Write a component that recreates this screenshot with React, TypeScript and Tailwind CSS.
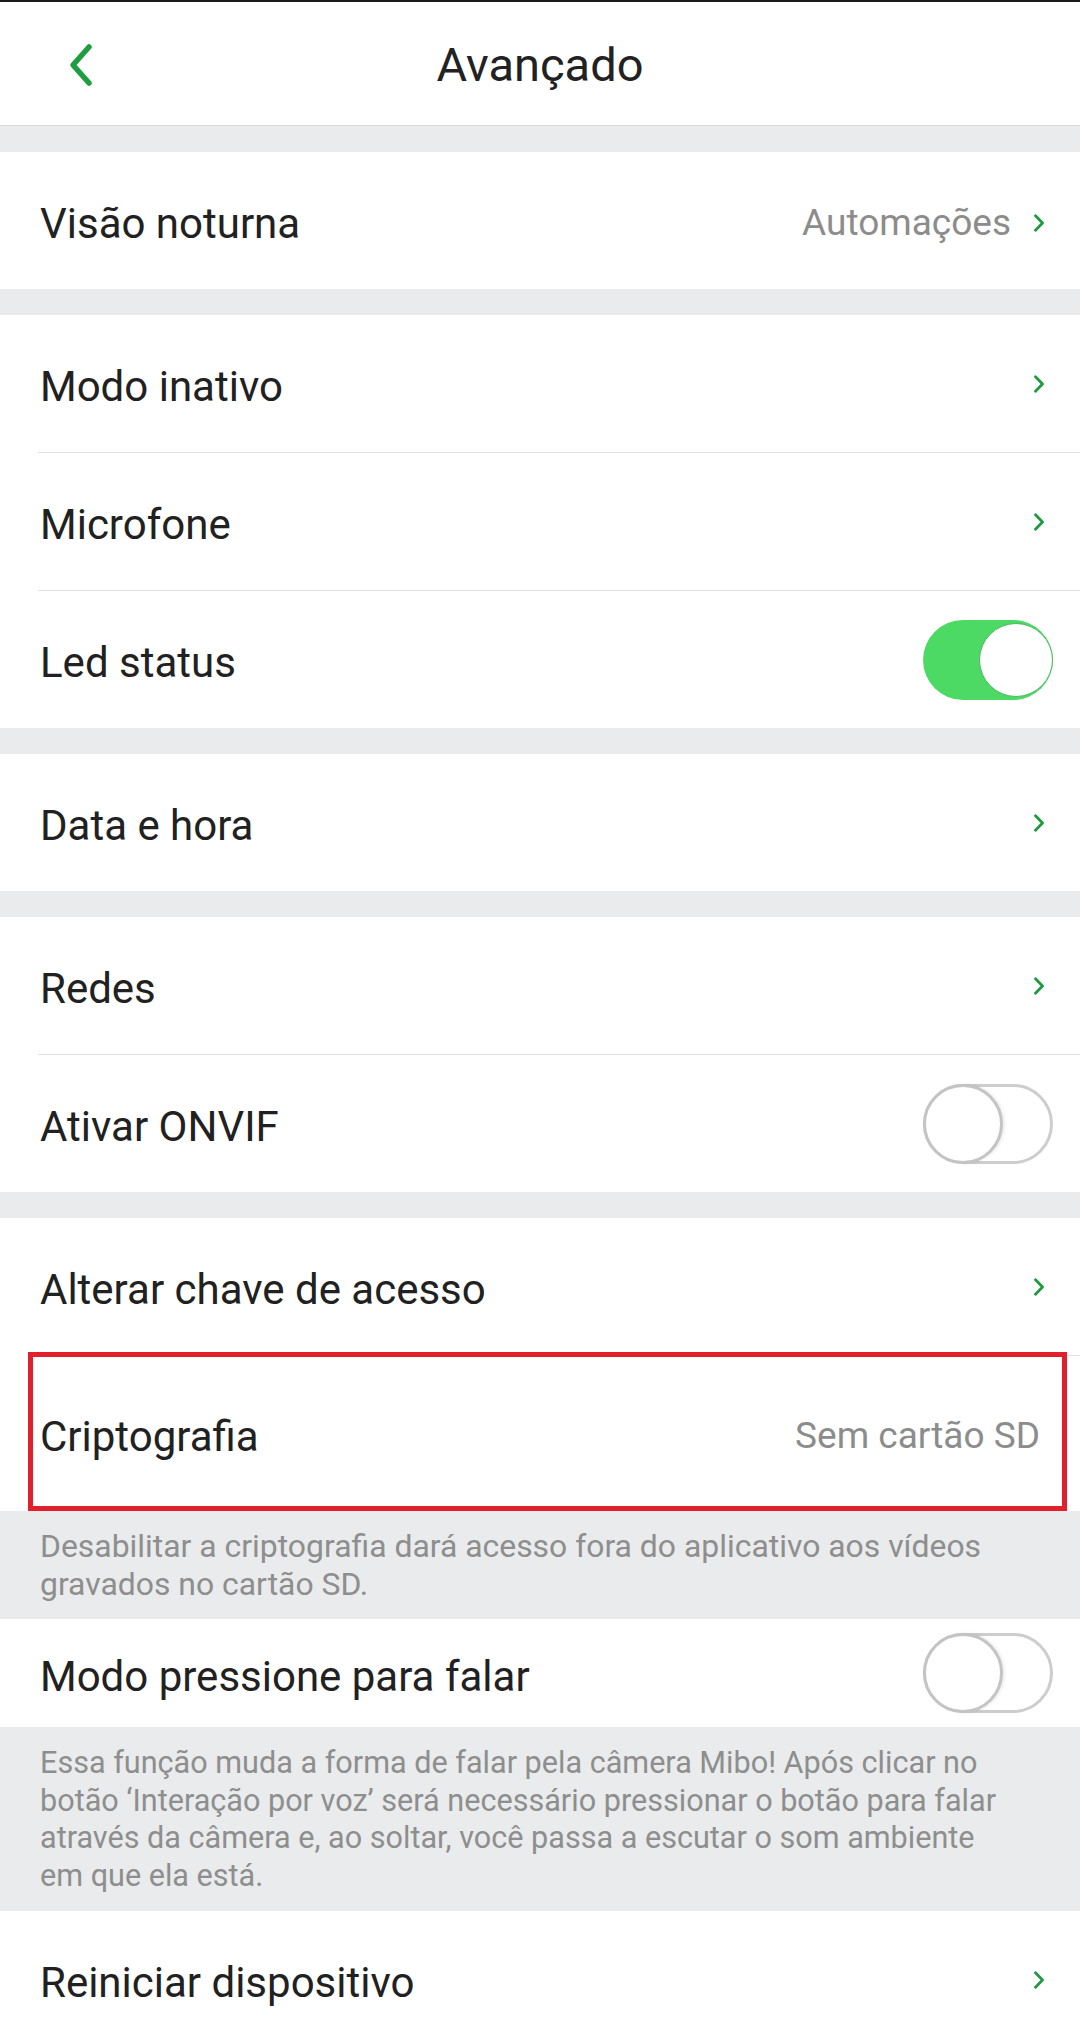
import React from "react";

const Chevron = () => (
  <svg width="12" height="18" viewBox="0 0 12 18" className="shrink-0">
    <polyline points="2.5,1.8 9.5,9 2.5,16.2" fill="none" stroke="#1f9a3e" strokeWidth="2.8" strokeLinecap="round" strokeLinejoin="round" />
  </svg>
);

const ToggleOn = () => (
  <div className="relative w-[130px] h-[80px] rounded-full bg-[#4cd964] shrink-0">
    <div className="absolute right-0 top-[3px] w-[74px] h-[74px] rounded-full bg-white border-[1.5px] border-[#4fb864]" />
  </div>
);

const ToggleOff = () => (
  <div className="relative w-[130px] h-[80px] shrink-0">
    <div className="absolute inset-0 rounded-full border-[3px] border-[#cdcdcd] bg-white" />
    <div className="absolute left-0 top-0 w-[80px] h-[80px] rounded-full border-[3px] border-[#c4c4c4] bg-white shadow-[2px_0_3px_rgba(0,0,0,0.08)]" />
  </div>
);

const Divider = () => <div className="h-px bg-[#e2e2e2] ml-[38px]" />;

function Row({
  label,
  right,
  h = "h-[137px]",
  pr = "pr-[35px]",
}: {
  label: string;
  right?: React.ReactNode;
  h?: string;
  pr?: string;
}) {
  return (
    <div className={`flex items-center justify-between bg-white pl-[40px] ${pr} ${h}`}>
      <span className="text-[42px] text-[#212121] translate-y-[3px]">{label}</span>
      {right}
    </div>
  );
}

const Gap = () => <div className="h-[26px]" />;

export default function App() {
  return (
    <div
      className="w-[1080px] h-[2032px] overflow-hidden bg-[#e9ebec]"
      style={{ fontFamily: "Roboto, 'Noto Sans', sans-serif" }}
    >
      {/* Header */}
      <div className="relative h-[126px] bg-white border-t-2 border-t-[#1a1a1a] border-b border-b-[#d9d9d9] flex items-center justify-center">
        <svg width="26" height="44" viewBox="0 0 26 44" className="absolute left-[68px] top-[41px]">
          <polyline points="21,4 5,22 21,40" fill="none" stroke="#1f9d3f" strokeWidth="5.5" strokeLinecap="round" strokeLinejoin="round" />
        </svg>
        <span className="text-[47px] text-[#222222] leading-none translate-y-[1px]">Avançado</span>
      </div>
      <Gap />

      <Row
        label="Visão noturna"
        right={
          <div className="flex items-center gap-[22px] translate-y-[2px]">
            <span className="text-[37px] text-[#8c8c8c]">Automações</span>
            <Chevron />
          </div>
        }
      />
      <Gap />

      <div className="bg-white">
        <Row label="Modo inativo" right={<Chevron />} />
        <Divider />
        <Row label="Microfone" right={<Chevron />} />
        <Divider />
        <Row label="Led status" right={<ToggleOn />} pr="pr-[27px]" />
      </div>
      <Gap />

      <Row label="Data e hora" right={<Chevron />} />
      <Gap />

      <div className="bg-white">
        <Row label="Redes" right={<Chevron />} />
        <Divider />
        <Row label="Ativar ONVIF" right={<ToggleOff />} pr="pr-[27px]" />
      </div>
      <Gap />

      <div className="bg-white">
        <Row label="Alterar chave de acesso" right={<Chevron />} />
        <Divider />
        <div className="relative">
          <Row
            label="Criptografia"
            h="h-[155px]"
            pr="pr-[40px]"
            right={<span className="text-[37px] text-[#8c8c8c] translate-y-[2px]">Sem cartão SD</span>}
          />
          <div className="absolute left-[28px] top-[-4px] w-[1039px] h-[159px] border-[5px] border-[#e2202b]" />
        </div>
      </div>

      <div className="pl-[40px] pr-[30px] py-[16px] text-[31.9px] leading-[38px] text-[#8e8e8e]">
        <div className="whitespace-nowrap">Desabilitar a criptografia dará acesso fora do aplicativo aos vídeos</div>
        <div className="whitespace-nowrap">gravados no cartão SD.</div>
      </div>

      <Row label="Modo pressione para falar" h="h-[108px]" pr="pr-[27px]" right={<ToggleOff />} />

      <div className="pl-[40px] pr-[20px] py-[17px] text-[30.6px] leading-[37.5px] text-[#8e8e8e]">
        <div className="whitespace-nowrap">Essa função muda a forma de falar pela câmera Mibo! Após clicar no</div>
        <div className="whitespace-nowrap">botão ‘Interação por voz’ será necessário pressionar o botão para falar</div>
        <div className="whitespace-nowrap">através da câmera e, ao soltar, você passa a escutar o som ambiente</div>
        <div className="whitespace-nowrap">em que ela está.</div>
      </div>

      <Row label="Reiniciar dispositivo" right={<Chevron />} />
    </div>
  );
}
